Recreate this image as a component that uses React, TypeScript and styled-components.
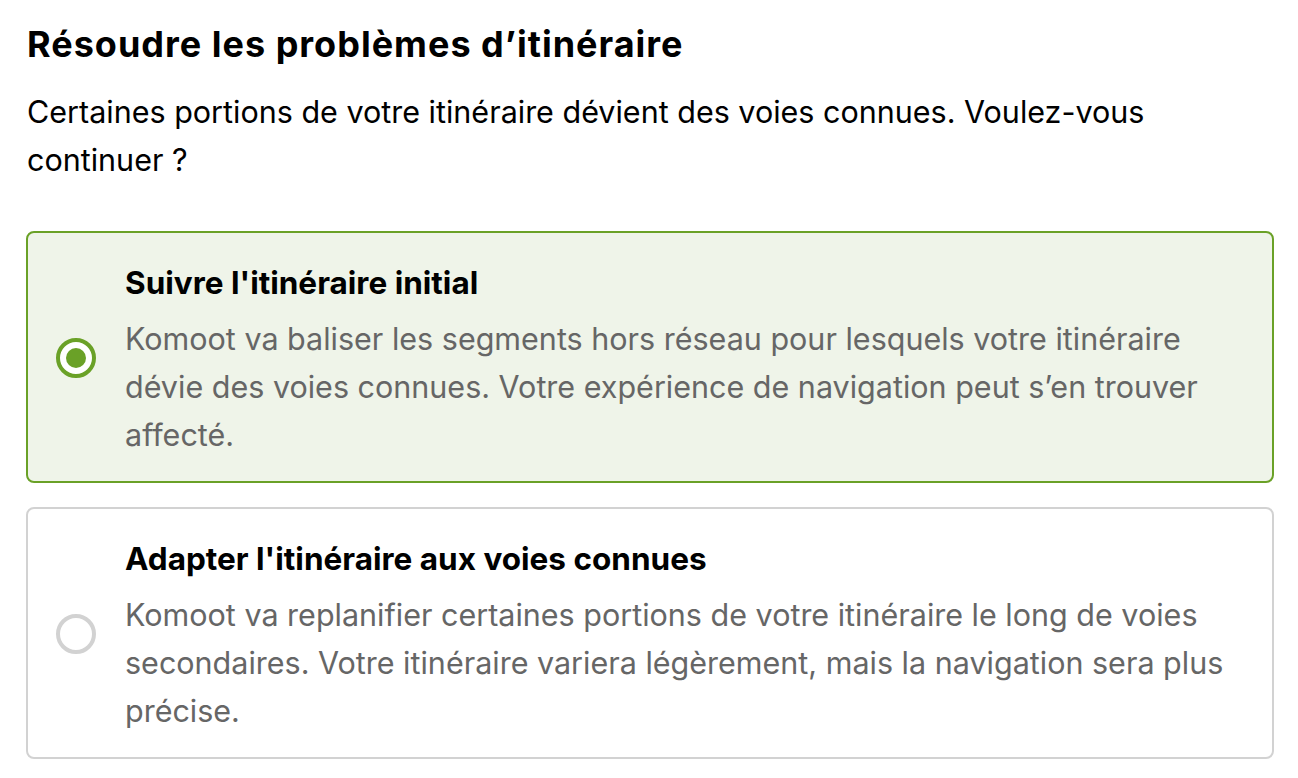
import React, { useState } from "react";
import styled, { createGlobalStyle } from "styled-components";

const Global = createGlobalStyle`
  html, body { margin: 0; padding: 0; background: #ffffff; }
  body { font-family: Inter, "Noto Sans", "Liberation Sans", sans-serif; color: #000; }
  * { box-sizing: border-box; }
`;

const Page = styled.div`
  padding: 20px 25px 0 27px;
  display: flex;
  flex-direction: column;
`;

const Title = styled.h1`
  margin: 0;
  font-size: 36px;
  line-height: 48px;
  font-weight: 700;
  letter-spacing: 1px;
`;

const Intro = styled.p`
  margin: 20px 0 0 0;
  font-size: 30.5px;
  line-height: 48px;
  font-weight: 400;
`;

const Options = styled.div`
  margin: 47px -1px 0 -1px;
  display: flex;
  flex-direction: column;
  gap: 24px;
`;

const Card = styled.label<{ $selected: boolean }>`
  display: flex;
  align-items: center;
  gap: 29px;
  padding: 26px 28px 22px 28px;
  border: 2px solid ${(p) => (p.$selected ? "#6aa127" : "#d2d2d2")};
  background: ${(p) => (p.$selected ? "#eff4e9" : "#ffffff")};
  border-radius: 8px;
  cursor: pointer;
`;

const Radio = styled.span<{ $selected: boolean }>`
  flex: none;
  width: 40px;
  height: 40px;
  margin-top: -2px;
  border-radius: 50%;
  border: 4px solid ${(p) => (p.$selected ? "#6aa127" : "#d2d2d2")};
  display: flex;
  align-items: center;
  justify-content: center;
  background: #fff;
  &::after {
    content: "";
    width: 20px;
    height: 20px;
    border-radius: 50%;
    background: ${(p) => (p.$selected ? "#6aa127" : "transparent")};
  }
`;

const Body = styled.div`
  display: flex;
  flex-direction: column;
  gap: 8px;
`;

const CardTitle = styled.div`
  font-size: 31.5px;
  line-height: 48px;
  font-weight: 700;
`;

const CardText = styled.div`
  font-size: 30.5px;
  line-height: 48px;
  color: #666666;
`;

const options = [
  {
    title: "Suivre l'itinéraire initial",
    text: "Komoot va baliser les segments hors réseau pour lesquels votre itinéraire dévie des voies connues. Votre expérience de navigation peut s’en trouver affecté.",
  },
  {
    title: "Adapter l'itinéraire aux voies connues",
    text: "Komoot va replanifier certaines portions de votre itinéraire le long de voies secondaires. Votre itinéraire variera légèrement, mais la navigation sera plus précise.",
  },
];

export default function App() {
  const [sel, setSel] = useState(0);
  return (
    <>
      <Global />
      <Page>
        <Title>Résoudre les problèmes d’itinéraire</Title>
        <Intro>
          Certaines portions de votre itinéraire dévient des voies connues. Voulez-vous continuer ?
        </Intro>
        <Options>
          {options.map((o, i) => (
            <Card key={i} $selected={sel === i} onClick={() => setSel(i)}>
              <Radio $selected={sel === i} />
              <Body>
                <CardTitle>{o.title}</CardTitle>
                <CardText>{o.text}</CardText>
              </Body>
            </Card>
          ))}
        </Options>
      </Page>
    </>
  );
}
